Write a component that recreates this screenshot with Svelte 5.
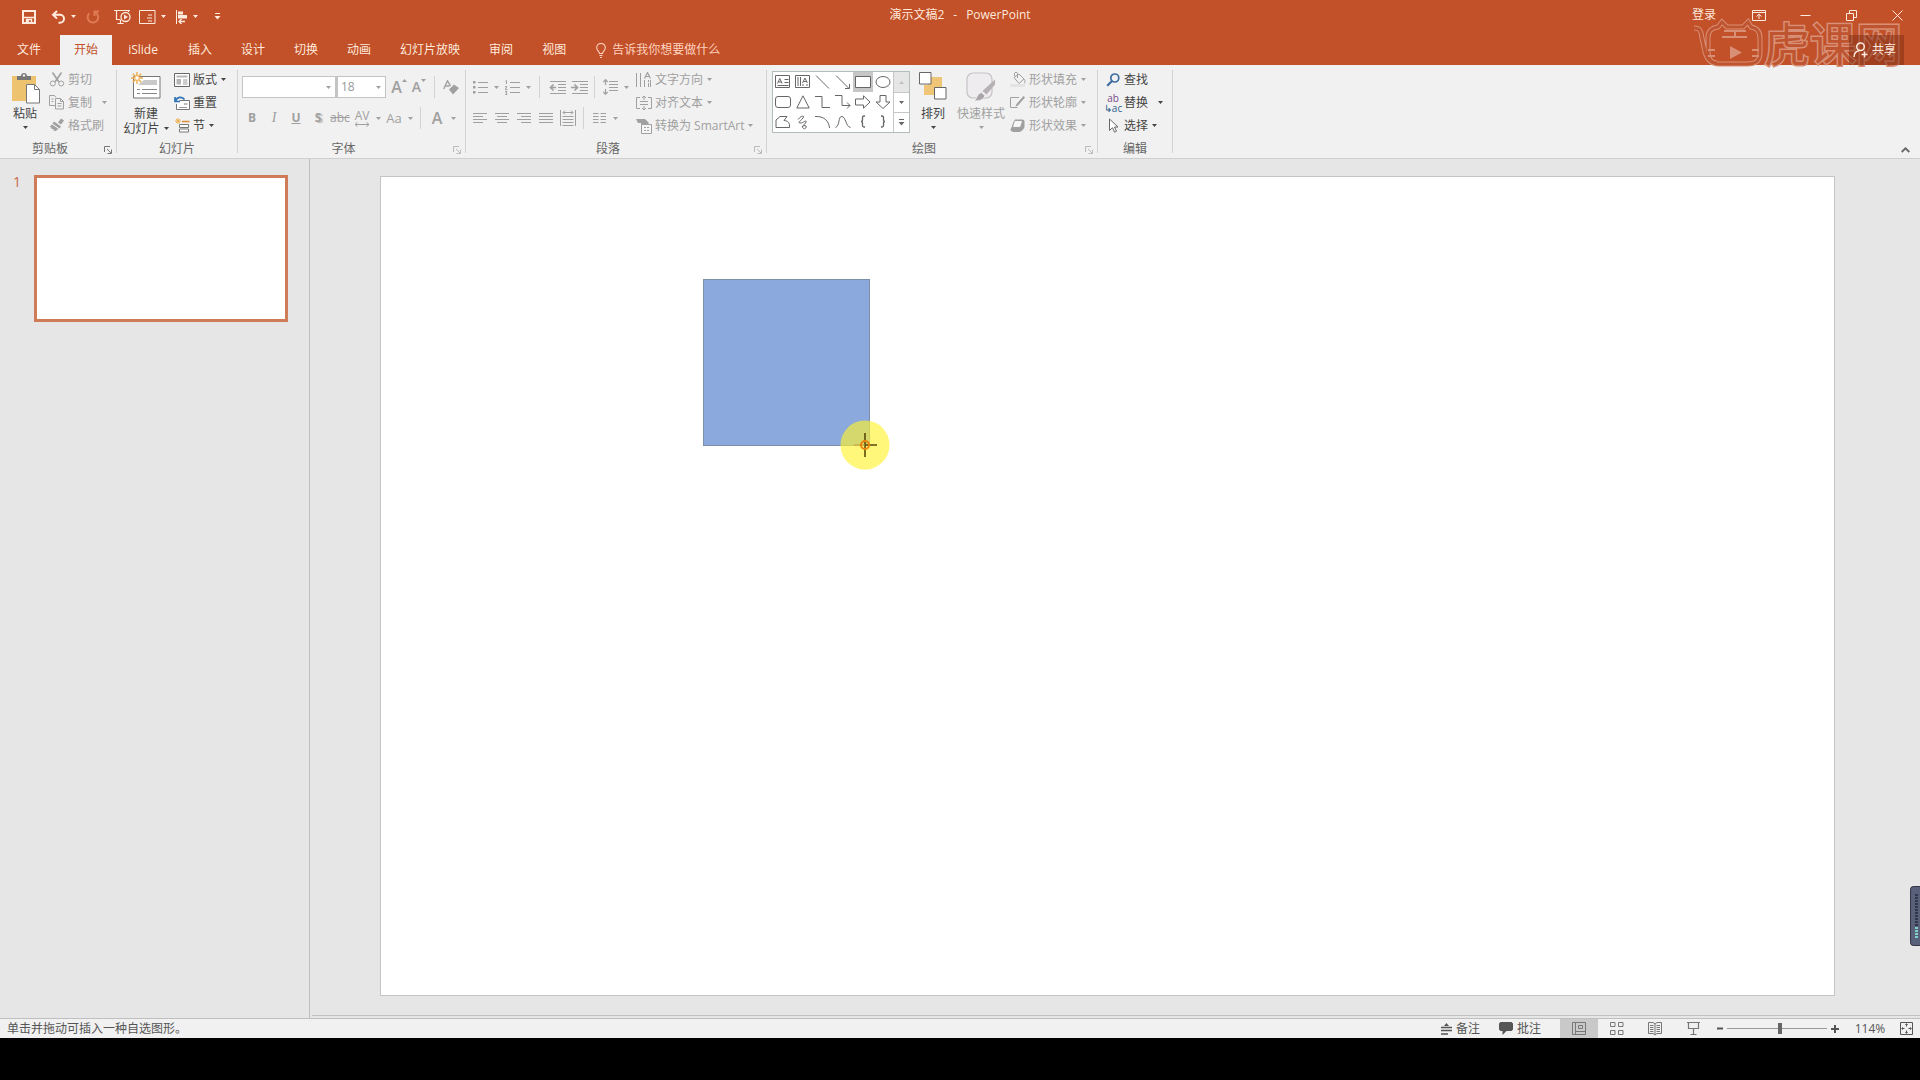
<script>
  let zoom = $state(53);
  let picked = $state(4);

  const tabs = ['开始', 'iSlide', '插入', '设计', '切换', '动画', '幻灯片放映', '审阅', '视图'];

  // name: [width, height, svg body]; strokes and fills default to currentColor
  const icons = {
    down: [5, 3, '<path d="M0 0h5L2.5 3z" fill="currentColor" stroke="none"/>'],
    up: [5, 3, '<path d="M0 3h5L2.5 0z" fill="currentColor" stroke="none"/>'],
    more: [7, 7, '<path d="M1 .5h5"/><path d="M0.500 3h6L3.500 6.500z" fill="currentColor" stroke="none"/>'],
    save: [14, 14, '<path d="M1 1h12v12H1z" stroke-width="2"/><path d="M2 7.500h10" stroke-width="1.500"/><path d="M4.500 13v-3.500h5V13" stroke-width="1.500"/><path d="M5 10h2v3H5z" fill="currentColor" stroke="none"/>'],
    undo: [15, 14, '<path d="M6 1L2 4.800 6 8.600M2.500 4.800H9a4 4 0 0 1 0 8H7.500" stroke-width="2"/>'],
    redo: [14, 14, '<path d="M8.500 2.200A5.300 5.300 0 1 1 3.500 3.200" stroke-width="2"/><path d="M8.500 6V1.500H13" stroke-width="2"/>'],
    show: [18, 16, '<path d="M0 1.500h16M2.500 2v8.500h4M14.500 2v1M3.500 14.500h6M6.500 11v3" stroke-width="1.200"/><circle cx="11.500" cy="8" r="4.500" stroke-width="1.300"/><path d="M10 5.500v5l4-2.500z" fill="currentColor" stroke="none"/>'],
    form: [17, 14, '<path d="M.5.500h15.500v13H.5z"/><path d="M9 5h4M8 8h5M9 11h4"/>'],
    align: [13, 14, '<path d="M1.500 0v14"/><path d="M3 1.500h5v3H3zM3 5h9v3.500H3z" fill="currentColor" stroke="none"/><path d="M10 11.500H4M6.500 9L4 11.500 6.500 14" stroke-width="1.300"/>'],
    ribbonopt: [14, 11, '<path d="M.5.500h13v10H.5zM.5 2.500h13M7 9V4.500M4.500 6.500L7 4.200l2.500 2.300"/>'],
    min: [11, 11, '<path d="M.5 5.500h10"/>'],
    restore: [11, 11, '<path d="M.5 3.500h7v7h-7zM3.500 3V.5h7v7H8"/>'],
    close: [11, 11, '<path d="M.5.500l10 10M10.500.500l-10 10"/>'],
    bulb: [10, 15, '<path d="M3.500 10.500C3.500 8.500.700 7.500.700 4.700a4.300 4.300 0 0 1 8.600 0c0 2.800-2.800 3.800-2.800 5.800zM3.500 12.500h3M4 14.500h2" stroke-width="1.100"/>'],
    share: [15, 16, '<circle cx="7.500" cy="4.800" r="3.800" stroke-width="1.500"/><path d="M1 15c.2-4 2.500-6 5-6.300M11.500 9.500v6M8.500 12.500h6" stroke-width="1.500"/>'],
    paste: [29, 32, '<path d="M1 4h24v25H1z" fill="#eec36f" stroke="none"/><path d="M6 8V4h4c0-4 6-4 6 0h4v4z" fill="#777" stroke="none"/><circle cx="13" cy="3.500" r="1.200" fill="#f1f1f1" stroke="none"/><path d="M15.500 12.500h8l5 5v13.500h-13z" fill="#fff" stroke="#777"/><path d="M23.500 12.500v5h5" stroke="#777"/>'],
    cut: [16, 15, '<path d="M3.500.500l6.500 9.500M12.500.500L6 10" stroke-width="1.600"/><circle cx="3.800" cy="11.500" r="2.500"/><circle cx="12.200" cy="11.500" r="2.500"/>'],
    copy: [16, 15, '<path d="M7 2.500L5.500.500h-5v10H6M2.500 4h2M2.500 6.500h2"/><path d="M6.500 3.500h5l3 3v7.500h-8zM11.500 3.500v3h3M8.500 8.500h4M8.500 11h4"/>'],
    brush: [16, 15, '<path d="M9 4.500l3-4 3 2-3 4z" fill="currentColor" stroke="none"/><path d="M5 3.500l7 5-1.500 2-7-5zM3 6.500L.500 9l2 .5 0 1.500 2 0 0 1.500 2 .5 3-2z" fill="currentColor" stroke="none"/>'],
    newslide: [30, 27, '<path d="M2.500 4.500h26.500v21.500h-26.500z" fill="#fff" stroke="#777"/><path d="M13 8h13v5H7z" fill="#c9c9c9" stroke="none"/><path d="M6 17.500h3M11 17.500h15M6 21.500h3M11 21.500h15" stroke="#888"/><path d="M6 0v4M6 8v4M0 6h4M8 6h4M1.800 1.800l2.700 2.700M7.500 7.500l2.700 2.700M10.200 1.800L7.500 4.500M4.500 7.500l-2.700 2.700" stroke="#eeb04f" stroke-width="1.500"/><circle cx="6" cy="6" r="2.300" fill="#fff" stroke="#eeb04f"/>'],
    layout: [16, 14, '<path d="M.5.500h15v13H.5z" fill="#fff" stroke="#666"/><path d="M2.500 2.500h11v2h-11zM2.500 6h4.500v5.500H2.500z" fill="#b5b5b5" stroke="none"/><path d="M9 7h4.500M9 9h4.500M9 11h4.500" stroke="#999"/>'],
    reset: [16, 14, '<path d="M5.500 4.500h10v9h-13V8" fill="#fff" stroke="#777"/><path d="M10 7h3.500v2H10z" fill="#bbb" stroke="none"/><path d="M5 11.500h8" stroke="#999"/><path d="M1 1v4.500h5M1.500 5C3 1 8 0 10.500 3.500" stroke="#2f74b5" stroke-width="1.700"/>'],
    section: [16, 15, '<path d="M4 0v6M1 3h6M2 1l4 4M6 1L2 5" stroke="#eeb04f"/><path d="M8 3.500h7.500" stroke="#df8a3a" stroke-width="1.500"/><path d="M5.500 6.500h9v3h-9zM5.500 11h9v3h-9z" stroke="#777" fill="#fff"/>'],
    clear: [16, 15, '<path d="M6 9.500l5-5 5 3.500-6 6.500z" fill="currentColor" stroke="none"/><path d="M.7 9L4.500.800 7.500 6M2 6h4.500" stroke-width="1.400"/>'],
    space: [16, 5, '<path d="M1 2.500h14M3.500.300L1 2.500l2.500 2.200M12.500.300L15 2.500l-2.500 2.200"/>'],
    bullets: [15, 14, '<path d="M0 1h2.500v2.500H0zM0 6h2.500v2.500H0zM0 11h2.500v2.500H0z" fill="currentColor" stroke="none"/><path d="M5 2.500h10M5 7.500h10M5 12.500h10"/>'],
    numbers: [15, 15, '<path d="M.5 1l1-.5V4M0 6.500h1.800L.3 9.500H2.500M0 11.500h2l-1 1.500 1 .5v1H0"/><path d="M5 2.500h10M5 7.500h10M5 12.500h10"/>'],
    outdent: [17, 13, '<path d="M1 .500h16M9 3.500h8M9 6.500h8M9 9.500h8M1 12.500h16"/><path d="M7 6.500H2M4.500 3.500l-3 3 3 3" stroke-width="1.700"/>'],
    indent: [17, 13, '<path d="M1 .500h16M9 3.500h8M9 6.500h8M9 9.500h8M1 12.500h16"/><path d="M0 6.500h6M3.500 3.500l3 3-3 3" stroke-width="1.700"/>'],
    lines: [15, 16, '<path d="M6 2.500h9M6 5.500h9M6 8.500h9M6 11.500h9"/><path d="M2.500 1v5M2.500 10v5M.3 3l2.200-2.300L4.700 3M.3 13l2.200 2.300L4.700 13" stroke-width="1.200"/>'],
    left: [14, 11, '<path d="M0 .500h14M0 3.500h10M0 6.500h14M0 9.500h10"/>'],
    center: [14, 11, '<path d="M0 .500h14M2 3.500h10M0 6.500h14M2 9.500h10"/>'],
    right: [14, 11, '<path d="M0 .500h14M4 3.500h10M0 6.500h14M4 9.500h10"/>'],
    justify: [14, 11, '<path d="M0 .500h14M0 3.500h14M0 6.500h14M0 9.500h14"/>'],
    distribute: [16, 16, '<path d="M.5 0v16M15.500 0v16M3 2.500h10M5 .500L3 2.500l2 2M11 .500l2 2-2 2M2.500 6.500h11M2.500 9.500h11M2.500 12.500h11M2.500 15.500h11"/>'],
    columns: [13, 11, '<path d="M0 .500h5.500M0 3.500h5.500M0 6.500h5.500M0 9.500h5.500M7.500.500H13M7.500 3.500H13M7.500 6.500H13M7.500 9.500H13"/>'],
    textdir: [16, 16, '<path d="M.5 1v14M4.500 1v14M8.500 8v7M12.500 8v2M12.500 11v4M14.500 8v7"/><path d="M8.500 6.500L11.500.500l3 6M9.500 4.500h4" stroke-width="1.200"/>'],
    textalign: [16, 16, '<path d="M4 2.500H.5v11H4M12 2.500h3.500v11H12M4 6.500h8M4 9.500h8M8 1v4M8 11v4M6 3l2-2 2 2M6 13l2 2 2-2"/>'],
    smartart: [16, 16, '<path d="M0 1h9l4 4-2 2H5V5H2z" fill="currentColor" stroke="none"/><path d="M5.500 6.500h10v9h-10z" fill="#f6f6f6"/><path d="M8 9.500h5M8 12.500h5" stroke-dasharray="2 1"/>'],
    arrange: [28, 28, '<path d="M9 5h14v18H5V13h4z" fill="#efc578" stroke="none"/><path d="M.5.500h11.500v11.500H.5zM15.500 15.500H27V27H15.500z" fill="#fff" stroke="#666"/>'],
    styles: [30, 30, '<rect x="1" y="1" width="25" height="25" rx="6" fill="#efecef" stroke="#c6c2c6" stroke-width="1.200"/><path d="M29 7.500v5l-8.500 10-4-3.500z" fill="#b5b1b5" stroke="none"/><path d="M15.500 20.500l3.500 3c-1.500 5-6 5.500-11 5.500 3-2 3-8 7.500-8.500z" fill="#a9a5a9" stroke="#f1f1f1"/>'],
    fill: [16, 15, '<path d="M4 5.500l5-3.500 5 5-5 4.500zM7.500 6V1.500c0-1.500-3-1.500-3 0V4M14 7c1.500 2 1.500 4 0 4"/><path d="M0 12h15v3H0z" fill="#e3e3e3" stroke="none"/>'],
    outline: [16, 14, '<path d="M9 1.500H.5v10h7"/><path d="M13.500 0l1.500 1.500L8 9.500l-2.500 1L6.500 8z" fill="currentColor" stroke="none"/>'],
    effect: [16, 14, '<path d="M5 .5h7q2.500 0 2.500 2v5q0 1.500-1.500 3L11.500 12q-1 1-2.500 1H4q-3 0-3.500-2.500z" fill="currentColor" stroke="none"/><path d="M6 1.500h5q1.800 0 1.300 1.500l-1.500 4.500q-.5 1-1.800 1H4q-1.800 0-1.300-1.500L4 2.800q.5-1.300 2-1.300z" fill="#f6f6f6"/>'],
    find: [14, 14, '<circle cx="8.800" cy="5" r="4" stroke="#3e6e9e" stroke-width="1.700"/><path d="M6 8L1.200 12.800" stroke="#3e6e9e" stroke-width="2.200"/>'],
    select: [10, 15, '<path d="M1.500 1v11.500l3-2.800 2 4.500 2-1-2-4.200h3.500z" fill="#fff" stroke="#666"/>'],
    launch: [8, 8, '<path d="M.5 6V.500H6M3 3l4 4M7.500 3.500v4h-4"/>'],
    notes: [11, 12, '<path d="M5.500 0L8 3H3z" fill="currentColor" stroke="none"/><path d="M0 4.500h11M0 7.500h11M0 11h7" stroke-width="1.300"/>'],
    comment: [14, 13, '<path d="M1.500 0h11L14 1.500v6L12.500 9H7.500L3.500 13V9h-2L0 7.500v-6z" fill="currentColor" stroke="none"/>'],
    normal: [14, 13, '<path d="M.5.500h13v12H.5zM3.500.500v12M3.500 9.500h10M6.500 3.500h4v3h-4z"/>'],
    sorter: [14, 13, '<path d="M.5.500h4.500v4H.5zM8.500.500H13v4H8.500zM.5 8.500h4.500v4H.5zM8.500 8.500H13v4H8.500z"/>'],
    reading: [14, 14, '<path d="M.5.500H5L7 2l2-1.500h4.500v11H9L7 13l-2-1.500H.5zM7 2v11M2 3.500h3.500M2 5.500h3.500M2 7.500h3.500M2 9.500h3.500M8.500 3.500H12M8.500 5.500H12M8.500 7.500H12M8.500 9.500H12"/>'],
    present: [13, 13, '<path d="M0 .500h13M1.500 1v5.500h10V1M6.500 7v5M3.500 12.500h6" stroke-width="1.200"/>'],
    fit: [13, 13, '<path d="M.5.500h12v12H.5zM6.500 2v2.500M6.500 8.500V11M2 6.500h2.500M8.500 6.500H11"/><path d="M5 3l1.500-1.500L8 3M5 10l1.500 1.500L8 10M3 5L1.500 6.500 3 8M10 5l1.500 1.500L10 8" stroke-width=".7"/>'],
    minus: [7, 7, '<path d="M0 3.500h6" stroke-width="2"/>'],
    plus: [8, 8, '<path d="M0 4h8M4 0v8" stroke-width="2"/>'],
    collapse: [9, 6, '<path d="M.7 5L4.500 1.300 8.300 5" stroke-width="1.800"/>'],
    s0: [16, 14, '<path d="M.5.500h14v12H.5zM9.500 4.500h4M9.500 7.500h4M2.500 10.500h11"/><path d="M2.500 8.500L4.800 3.500 7 8.500M3.500 7h3"/>'],
    s1: [16, 14, '<path d="M.5.500h14v12H.5zM3 2v9M5.500 2v9M8 9v2M12 9v2"/><path d="M7.500 8L10 3l2.300 5M8.500 6.500h3"/>'],
    s2: [16, 14, '<path d="M1 .500l13 13"/>'],
    s3: [16, 14, '<path d="M1 .500l13 13M14.500 9v4.500H10"/>'],
    s4: [16, 12, '<path d="M.5.500h15v11H.5z" fill="#fff"/>'],
    s5: [16, 12, '<ellipse cx="8" cy="6" rx="7" ry="5.500"/>'],
    s6: [16, 12, '<rect x=".5" y=".5" width="15" height="11" rx="2.500"/>'],
    s7: [14, 14, '<path d="M7 .800L13.200 13H.8z"/>'],
    s8: [16, 12, '<path d="M0 .500h7v11h8"/>'],
    s9: [16, 14, '<path d="M0 .500h7v10h8M12 7.500l3 3-3 3"/>'],
    s10: [16, 14, '<path d="M.5 4h8V.800L15 7l-6.500 6.200V10h-8z"/>'],
    s11: [16, 14, '<path d="M5 .500h6v6.500h4L8 13.500 1 7h4z"/>'],
    s12: [16, 14, '<path d="M1 12.500V5l4-3.500h7L9 5.500c2 0 5 1 5.500 4v3z"/>'],
    s13: [14, 15, '<path d="M2 4.500C5 .5 9 0 7 3S1 7.500 4 8s7-4 6-1-5 4-3 6 4-1 3-2-4 0-4 1"/>'],
    s14: [16, 14, '<path d="M0 1.500C9 1 14 6 14.500 13"/>'],
    s15: [16, 14, '<path d="M.5 12.500C5 11 3 1 7 1.500s3.500 10 8.500 11"/>'],
    s16: [8, 14, '<path d="M6 1H5Q3.500 1 3.500 2.500V5Q3.500 6.500 2 6.500 3.500 6.500 3.500 8v2.500Q3.500 12 5 12h1" stroke-width="1.300"/>'],
    s17: [8, 14, '<path d="M2 1h1Q4.500 1 4.500 2.500V5Q4.500 6.500 6 6.500 4.500 6.500 4.500 8v2.500Q4.500 12 3 12H2" stroke-width="1.300"/>']
  };
  const shapeNames = ['文本框', '竖排文本框', '直线', '箭头', '矩形', '椭圆', '圆角矩形', '三角形', '肘形连接符', '肘形箭头', '右箭头', '下箭头', '任意多边形', '自由曲线', '弧形', '曲线', '左大括号', '右大括号'];
  const views = [['normal', '普通视图'], ['sorter', '幻灯片浏览'], ['reading', '阅读视图'], ['present', '幻灯片放映']];
</script>

{#snippet icon(name)}
  <svg class="ic" width={icons[name][0]} height={icons[name][1]} viewBox="0 0 {icons[name][0]} {icons[name][1]}" aria-hidden="true">{@html icons[name][2]}</svg>
{/snippet}

{#snippet tool(name, label, arrow = false)}
  <button class="tool" aria-label={label}><span class="face">{@render icon(name)}</span>{#if arrow}<span class="drop">{@render icon('down')}</span>{/if}</button>
{/snippet}

{#snippet small(name, label, arrow = false, cls = '')}
  <button class="small {cls}"><span class="pic">{@render icon(name)}</span><span>{label}</span>{#if arrow}<span class="tip">{@render icon('down')}</span>{/if}</button>
{/snippet}

{#snippet foot(label, launcher = '')}
  <div class="foot"><span>{label}</span>{#if launcher}<button class="launch {launcher}" aria-label="{label}设置">{@render icon('launch')}</button>{/if}</div>
{/snippet}

<div class="app">
  <header>
    <div class="titlebar">
      <div class="quick">
        <button class="save" aria-label="保存">{@render icon('save')}</button>
        <button class="split" aria-label="撤消">{@render icon('undo')}{@render icon('down')}</button>
        <button class="redo" aria-label="重复" disabled>{@render icon('redo')}</button>
        <button aria-label="从头开始">{@render icon('show')}</button>
        <button class="split" aria-label="窗体">{@render icon('form')}{@render icon('down')}</button>
        <button class="split last" aria-label="对齐">{@render icon('align')}{@render icon('down')}</button>
        <button aria-label="自定义快速访问工具栏">{@render icon('more')}</button>
      </div>
      <h1><span>演示文稿2</span><span>-</span><span>PowerPoint</span></h1>
      <div class="window">
        <button class="login">登录</button>
        <button aria-label="功能区显示选项">{@render icon('ribbonopt')}</button>
        <button aria-label="最小化">{@render icon('min')}</button>
        <button aria-label="还原">{@render icon('restore')}</button>
        <button aria-label="关闭">{@render icon('close')}</button>
      </div>
    </div>
    <nav>
      <button class="file">文件</button>
      {#each tabs as tab, i}
        <button class="tab" class:active={i === 0}>{tab}</button>
      {/each}
      <button class="tell">{@render icon('bulb')}<span>告诉我你想要做什么</span></button>
      <button class="share">{@render icon('share')}<span>共享</span></button>
    </nav>
    <div class="watermark" aria-hidden="true">
      <svg width="72" height="50" viewBox="0 0 72 50">
        <path class="rim" d="M3 10c7 0 7 4 8 10l3 14c2 8 6 12 14 12h28c9 0 13-3 13-11V20c0-7-3-10-9-11l-3-5-5 5H36l-5-5-4 5c-7 1-10 4-10 11v14c0 7 3 11 9 11" />
        <path class="core" d="M3 10c7 0 7 4 8 10l3 14c2 8 6 12 14 12h28c9 0 13-3 13-11V20c0-7-3-10-9-11l-3-5-5 5H36l-5-5-4 5c-7 1-10 4-10 11v14c0 7 3 11 9 11" />
        <path class="bar" d="M33 13h22M31 19h25M44 13v6M17 32h7M17 38h7M61 32h7M61 38h7" />
        <path class="play" d="M39 28v13l12-6.500z" />
      </svg>
      <span>虎课网</span>
    </div>
  </header>

  <section class="ribbon">
    <div class="group clip">
      <div class="body">
        <button class="large">
          <span class="big">{@render icon('paste')}</span><span>粘贴</span><span class="under">{@render icon('down')}</span>
        </button>
        <div class="stack off">
          {@render small('cut', '剪切')}
          {@render small('copy', '复制', true, 'far')}
          {@render small('brush', '格式刷')}
        </div>
      </div>
      {@render foot('剪贴板', 'on')}
    </div>

    <div class="group slides">
      <div class="body">
        <button class="large">
          <span class="big">{@render icon('newslide')}</span><span>新建</span><span class="inline">幻灯片{@render icon('down')}</span>
        </button>
        <div class="stack">
          {@render small('layout', '版式', true)}
          {@render small('reset', '重置')}
          {@render small('section', '节', true)}
        </div>
      </div>
      {@render foot('幻灯片')}
    </div>

    <div class="group font">
      <div class="body rows off">
        <div class="row first">
          <label class="combo name"><select aria-label="字体"><option></option></select>{@render icon('down')}</label>
          <label class="combo size"><select aria-label="字号"><option>18</option></select>{@render icon('down')}</label>
          <button class="tool narrow" aria-label="增大字号"><span class="face"><b class="a16">A</b>{@render icon('up')}</span></button>
          <button class="tool narrow" aria-label="减小字号"><span class="face"><b class="a14">A</b>{@render icon('down')}</span></button>
          <i class="sep"></i>
          {@render tool('clear', '清除格式')}
        </div>
        <div class="row">
          <button class="tool"><span class="face"><b>B</b></span></button>
          <button class="tool"><span class="face"><em>I</em></span></button>
          <button class="tool"><span class="face"><u>U</u></span></button>
          <button class="tool"><span class="face"><b class="shadow">S</b></span></button>
          <button class="tool"><span class="face"><s>abc</s></span></button>
          <button class="tool" aria-label="字符间距"><span class="face av"><span>AV</span>{@render icon('space')}</span><span class="drop">{@render icon('down')}</span></button>
          <button class="tool case"><span class="face">Aa</span><span class="drop">{@render icon('down')}</span></button>
          <i class="sep"></i>
          <button class="tool" aria-label="字体颜色"><span class="face"><b class="a16">A</b></span><span class="drop">{@render icon('down')}</span></button>
        </div>
      </div>
      {@render foot('字体', 'dim')}
    </div>

    <div class="group para">
      <div class="body off">
        <div class="rows">
          <div class="row">
            {@render tool('bullets', '项目符号', true)}
            {@render tool('numbers', '编号', true)}
            <i class="sep"></i>
            {@render tool('outdent', '降低列表级别')}
            {@render tool('indent', '提高列表级别')}
            <i class="sep tight"></i>
            {@render tool('lines', '行距', true)}
          </div>
          <div class="row">
            {@render tool('left', '左对齐')}
            {@render tool('center', '居中')}
            {@render tool('right', '右对齐')}
            {@render tool('justify', '两端对齐')}
            {@render tool('distribute', '分散对齐')}
            <i class="sep tight"></i>
            {@render tool('columns', '分栏', true)}
          </div>
        </div>
        <div class="stack">
          {@render small('textdir', '文字方向', true)}
          {@render small('textalign', '对齐文本', true)}
          {@render small('smartart', '转换为 SmartArt', true)}
        </div>
      </div>
      {@render foot('段落', 'dim')}
    </div>

    <div class="group draw">
      <div class="body">
        <div class="gallery">
          <div class="shapes">
            {#each shapeNames as name, i}
              <button class:on={picked === i} aria-label={name} onclick={() => (picked = i)}>{@render icon('s' + i)}</button>
            {/each}
          </div>
          <div class="scroll">
            <button class="spent" aria-label="上一行">{@render icon('up')}</button>
            <button aria-label="下一行">{@render icon('down')}</button>
            <button aria-label="其他">{@render icon('more')}</button>
          </div>
        </div>
        <button class="large order">
          <span class="big">{@render icon('arrange')}</span><span>排列</span><span class="under">{@render icon('down')}</span>
        </button>
        <button class="large off wide">
          <span class="big">{@render icon('styles')}</span><span>快速样式</span><span class="under">{@render icon('down')}</span>
        </button>
        <div class="stack off">
          {@render small('fill', '形状填充', true)}
          {@render small('outline', '形状轮廓', true)}
          {@render small('effect', '形状效果', true)}
        </div>
      </div>
      {@render foot('绘图', 'dim')}
    </div>

    <div class="group edit">
      <div class="body">
        <div class="stack">
          {@render small('find', '查找')}
          <button class="small far"><span class="pic swap"><span class="ab">ab</span><span class="ac">↳ac</span></span><span>替换</span><span class="tip">{@render icon('down')}</span></button>
          {@render small('select', '选择', true)}
        </div>
      </div>
      {@render foot('编辑')}
    </div>

    <button class="collapse" aria-label="折叠功能区">{@render icon('collapse')}</button>
  </section>

  <main>
    <aside>
      <span class="num">1</span>
      <button class="thumb" aria-label="幻灯片 1"></button>
    </aside>
    <section class="stage">
      <div class="slide">
        <div class="square"></div>
        <svg class="pointer" width="50" height="50" viewBox="0 0 50 50" aria-hidden="true">
          <circle cx="25" cy="25" r="24.500" fill="#fff22e" fill-opacity=".64" />
          <path d="M25 13v24M25 25h12" stroke="#5a4a0a" stroke-width="1.600" />
          <path d="M14 25h11" stroke="#c79a3a" />
          <circle cx="25" cy="25" r="4" fill="none" stroke="#e8830c" stroke-width="2" />
        </svg>
      </div>
    </section>
  </main>

  <footer>
    <span class="hint">单击并拖动可插入一种自选图形。</span>
    <button class="note">{@render icon('notes')}<span>备注</span></button>
    <button class="note">{@render icon('comment')}<span>批注</span></button>
    <div class="views">
      {#each views as view, i}
        <button class:current={i === 0} aria-label={view[1]}>{@render icon(view[0])}</button>
      {/each}
    </div>
    <button aria-label="缩小" onclick={() => (zoom -= 5)}>{@render icon('minus')}</button>
    <input type="range" min="0" max="100" aria-label="显示比例" bind:value={zoom} />
    <button aria-label="放大" onclick={() => (zoom += 5)}>{@render icon('plus')}</button>
    <button class="pct">114%</button>
    <button class="fit" aria-label="使幻灯片适应当前窗口">{@render icon('fit')}</button>
  </footer>
  <div class="strip"></div>

  <div class="meter" aria-hidden="true"><i class="dark"></i><i class="lit"></i></div>
</div>

<style>
  :global(body) { margin: 0; background: #000; }
  .app {
    position: relative;
    display: flex;
    flex-direction: column;
    min-height: 100vh;
    font: 12px/16px "Open Sans", "Noto Sans CJK SC", sans-serif;
    color: #444;
    overflow: hidden;
  }
  button {
    display: flex;
    align-items: center;
    justify-content: center;
    margin: 0;
    padding: 0;
    border: 0;
    background: none;
    font: inherit;
    color: inherit;
    white-space: nowrap;
  }
  .ic { display: block; flex: none; fill: none; stroke: currentColor; }
  .off { color: #a0a0a0; }

  header { position: relative; background: #c25028; color: #ffeadd; }
  .titlebar { display: grid; grid-template-columns: 1fr auto 1fr; height: 35px; }
  h1 { display: flex; gap: 9px; margin: 0; font-size: 12px; font-weight: 400; line-height: 30px; color: #ffe9dc; }
  .quick { display: flex; align-items: center; gap: 14px; padding: 0 0 2px 22px; }
  .split { gap: 5px; }
  .quick .save { margin-right: 1px; }
  .redo { color: #df7a55; }
  .quick .split + button { margin-left: -4px; }
  .quick .redo { margin-left: -4px; }
  .quick .redo + button { margin-right: -7px; }
  .quick .split + .last { margin-left: -5px; }
  .quick .last + button { margin-left: 2px; }
  .window { display: flex; justify-content: flex-end; height: 30px; }
  .window button { width: 46px; }
  .window .login { width: 64px; }
  nav { display: flex; height: 30px; }
  .file { padding: 0 19px 0 17px; }
  .tab { min-width: 52px; padding: 0 14px; margin-right: 1px; }
  .tab:nth-child(3) { min-width: 60px; }
  .active { background: #f1f1f1; color: #c25028; }
  .tell { gap: 6px; margin-left: 15px; color: #ffd2bf; }
  .share {
    position: relative;
    z-index: 2;
    gap: 4px;
    margin: 0 16px 0 auto;
    padding: 0 8px 0 4px;
    background: rgb(120 40 15 / 45%);
  }
  .watermark {
    position: absolute;
    top: 18px;
    right: 18px;
    display: flex;
    align-items: center;
    height: 50px;
    gap: 1px;
    font-size: 46px;
    line-height: 50px;
    color: #bf5530;
    -webkit-text-stroke: 3px #d88f75;
    paint-order: stroke fill;
    pointer-events: none;
  }
  .watermark svg { fill: none; }
  .rim { stroke: #d88f75; stroke-width: 5; }
  .core { stroke: #bf5530; stroke-width: 3; }
  .bar { stroke: #d88f75; stroke-width: 2; }
  .play { fill: #d88f75; }

  .ribbon {
    display: flex;
    padding-top: 3px;
    background: #f1f1f1;
    border-bottom: 1px solid #cfcfcf;
  }
  .group {
    display: flex;
    flex-direction: column;
    box-sizing: border-box;
    padding-right: 1px;
    background: linear-gradient(#d2d2d2, #d2d2d2) right 2px / 1px 83px no-repeat;
  }
  .clip { min-width: 117px; }
  .slides { min-width: 121px; }
  .font { min-width: 228px; }
  .para { min-width: 301px; }
  .draw { min-width: 331px; }
  .edit { min-width: 75px; }
  .body { display: flex; height: 69px; }
  .foot { display: flex; height: 21px; line-height: 24px; color: #666; }
  .foot span { flex: 1; text-align: center; }
  .launch { width: 16px; padding-top: 5px; }
  .launch.on { color: #777; }
  .launch.dim { color: #bbb; }

  .large { flex-direction: column; justify-content: flex-start; width: 48px; margin-left: 1px; padding-top: 4px; line-height: 15px; }
  .large.wide { width: 50px; }
  .big { display: flex; justify-content: center; height: 34px; }
  .under { display: flex; align-items: center; height: 13px; }
  .inline { display: flex; align-items: center; gap: 4px; }
  .slides .large { width: 52px; margin: 0 2px 0 3px; }

  .small { height: 23px; justify-content: flex-start; }
  .pic { display: flex; justify-content: center; width: 16px; margin-right: 3px; }
  .tip { margin-left: 4px; }
  .far .tip { margin-left: 10px; }
  .edit .stack { padding-left: 7px; }
  .swap { flex-direction: column; align-items: center; font-size: 10px; line-height: 10px; }
  .ab { color: #7a4a8c; }
  .ac { color: #2f5f8f; }

  .rows { display: flex; flex-direction: column; gap: 9px; padding: 8px 0 0 3px; }
  .body.rows { height: 61px; }
  .row { display: flex; height: 22px; }
  .para .rows { min-width: 167px; }
  .tool { height: 22px; }
  .face { display: flex; align-items: center; justify-content: center; width: 22px; }
  .drop { display: flex; justify-content: center; width: 10px; }
  .case { font-size: 13px; }
  .narrow .face { width: 20px; align-items: flex-start; line-height: 22px; }
  .narrow .ic { margin-top: 3px; }
  .face b { font-weight: 700; }
  .face .a16 { font-size: 16px; font-weight: 600; }
  .face .a14 { font-size: 14px; font-weight: 600; }
  .face em { font-family: "Liberation Serif", serif; font-size: 14px; }
  .face u { font-weight: 700; }
  .shadow { text-shadow: 2px 1px 1px #bbb; }
  .av { flex-direction: column; line-height: 12px; }
  .sep { width: 1px; margin: 0 6px; background: #d2d2d2; }
  .sep.tight { margin: 0 4px; }
  .font .sep { margin: 0 5px; }

  .combo { position: relative; display: flex; align-items: center; box-sizing: border-box; height: 22px; border: 1px solid #c4c4c4; background: #fff; }
  .combo .ic { position: absolute; right: 4px; pointer-events: none; }
  .combo select { width: 100%; height: 20px; padding: 0 3px; border: 0; background: none; appearance: none; font: inherit; font-size: 12px; color: #999; }
  .name { width: 94px; margin-left: 1px; }
  .size { width: 50px; margin-right: 3px; border-left-width: 2px; }

  .gallery { display: flex; align-self: flex-start; margin: 3px 0 0 5px; border: 1px solid #b4bcbc; background: #fff; }
  .shapes { display: grid; grid-template-columns: repeat(6, 20px); grid-auto-rows: 20px; color: #666; }
  .shapes .on { background: #c6c6c6; }
  .scroll { display: grid; grid-template-rows: 20px 20px 20px; width: 15px; border-left: 1px solid #c6c6c6; color: #666; }
  .scroll button + button { border-top: 1px solid #c6c6c6; }
  .scroll .spent { background: #e6e6e6; color: #c0c0c0; }
  .draw .order { width: 46px; margin: 0; }
  .draw .wide { margin: 0 4px 0 0; }
  .collapse { align-self: flex-end; margin: 0 10px 5px auto; color: #666; }

  main { display: flex; flex: 1; background: #e6e6e6; }
  aside { display: flex; align-items: flex-start; box-sizing: border-box; width: 310px; padding: 16px 21px 0 13px; border-right: 1px solid #bfbfbf; }
  .num { width: 21px; font-size: 14px; line-height: 14px; color: #c8694a; }
  .thumb { flex: 1; aspect-ratio: 254 / 147; border: 3px solid #d17c58; background: #fff; }
  .stage { display: flex; flex: 1; margin: 0 0 2px 2px; padding: 17px 85px 19px 68px; border-bottom: 1px solid #c2c2c2; }
  .slide { position: relative; flex: 1; border: 1px solid #c4c4c4; background: #fff; }
  .square { position: absolute; left: 322px; top: 102px; width: 165px; height: 165px; border: 1px solid #7c90ab; background: #8ba9dd; }
  .pointer { position: absolute; left: 459px; top: 243px; }

  footer { display: flex; align-items: stretch; height: 19px; border-top: 1px solid #bfbfbf; background: #f1f1f1; color: #555; line-height: 19px; }
  .hint { margin: 0 auto 0 7px; }
  .note { gap: 4px; margin-right: 19px; }
  .views { display: flex; margin-right: 5px; color: #777; }
  .views button { width: 38px; }
  .views .current { background: #c9c9c9; }
  input { width: 100px; margin: 0 4px 0 3px; background: linear-gradient(#999, #999) center / 100% 1px no-repeat; appearance: none; }
  input::-webkit-slider-thumb { width: 4px; height: 11px; background: #666; appearance: none; }
  .pct { width: 48px; margin-left: 7px; }
  .fit { margin: 0 7px 0 6px; }
  .strip { height: 42px; background: #000; }

  .meter {
    position: absolute;
    right: 0;
    bottom: 134px;
    display: flex;
    flex-direction: column;
    gap: 1px;
    box-sizing: border-box;
    width: 10px;
    padding: 7px 2px 6px 4px;
    border: 1px solid #34384a;
    border-right: 0;
    border-radius: 4px 0 0 4px;
    background: #59607a;
  }
  .dark { height: 32px; background: repeating-linear-gradient(#30364c 0 2px, #59607a 2px 3px); }
  .lit { height: 12px; background: repeating-linear-gradient(#7fd0cb 0 2px, #59607a 2px 3px); }
</style>
